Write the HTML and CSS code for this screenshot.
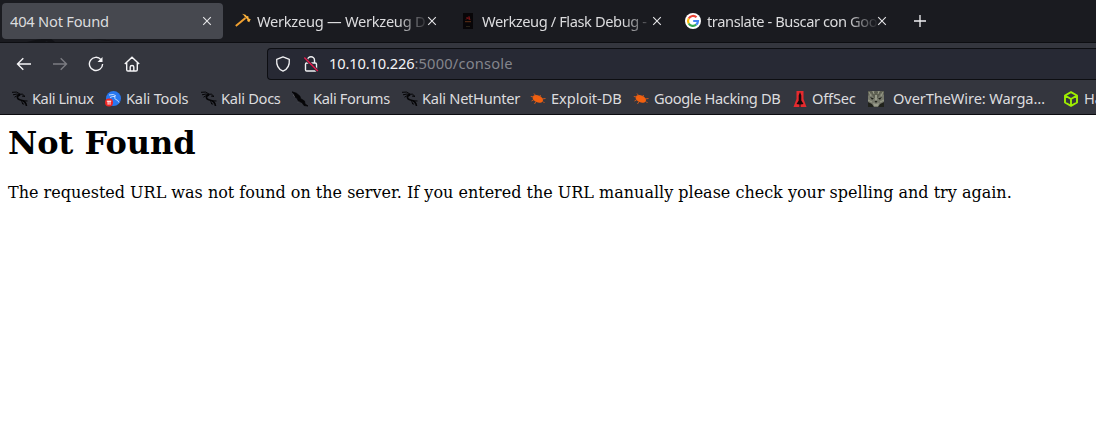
FILE: index.html
```html
<!DOCTYPE html>
<html lang="en">
<head>
<meta charset="utf-8">
<title>404 Not Found</title>
<link rel="stylesheet" href="styles.css">
</head>
<body>
<svg class="defs" width="0" height="0">
  <symbol id="close" viewBox="0 0 10 10"><path d="M1.2 1.2l7.6 7.6M8.800 1.2l-7.600 7.6" fill="none" stroke="#e6e6e8" stroke-width="1.1"/></symbol>
  <symbol id="dragon" viewBox="0 0 16 16"><path d="M0 1.300Q5 0 8 3M1 3.800Q5 2.300 8.500 3.800M2.500 6.200Q4.500 4.500 7 4.500M8 3.200h2.500l2.500 2.300-3-.5" fill="none" stroke="#050507" stroke-width="1"/><path d="M8 4C4 5 5 8.500 8.500 9c3.500.5 5.500 2 6 6" fill="none" stroke="#050507" stroke-width="1.600"/><path d="M11 9.800l4.500.2M9.500 9.500l1.200 3.500h1.500" stroke="#050507" fill="none"/></symbol>
  <symbol id="bug" viewBox="0 0 16 16"><ellipse cx="7.800" cy="8" rx="5.500" ry="3.500" transform="rotate(24 8 8)" fill="#f2600f"/><path d="M.8 5.500L4 6M4 2.500l2.500 3M10.500 4l-1 2M12 8l3.500-.5M1.500 10L4 8.500M4.500 13L6 10.500M13 10.500l1.500 1.500" fill="none" stroke="#d95c1c" stroke-width=".9"/></symbol>
</svg>
<header class="browser">
  <div class="tabs">
    <svg class="art" viewBox="0 0 100 4"><path d="M0 4Q14 0 24 .5L18 4zM16 0h7l5 4h-7zM64 1q14 0 28 3" fill="#101115"/></svg>
    <div class="tab active"><span class="title">404 Not Found</span><svg class="close"><use href="#close"/></svg></div>
    <div class="tab t2">
      <svg class="ico" viewBox="0 0 16 16"><path d="M.8 13L10.500 5" stroke="#f0a030" stroke-width="2"/><path d="M7 .8l3.500.9 1.300 1.600 1.400-.3.500 2.500 2 .8-1.500 3-2-1.300.2-1.500-2.600-2.700-1.300-1.800z" fill="#ffb43c"/></svg>
      <span class="title fade">Werkzeug — Werkzeug D</span><svg class="close"><use href="#close"/></svg></div>
    <div class="tab t3">
      <svg class="ico" viewBox="0 0 16 16"><path fill="#080608" d="M3 0h10v16H3z"/><path d="M6 6.500l3-3 1 3.500M6.500 4.500l3 2" fill="none" stroke="#7e1517" stroke-width="1"/><path d="M5 8.700h6" stroke="#623016" stroke-width="1"/><path d="M6 13.500h4" stroke="#292319"/></svg>
      <span class="title fade">Werkzeug / Flask Debug -</span><svg class="close"><use href="#close"/></svg></div>
    <div class="tab t4">
      <svg class="ico" viewBox="0 0 16 16"><circle cx="8" cy="8" r="8" fill="#fff"/><g fill="none" stroke-width="2.200"><path d="M11.500 4.300A5 5 0 0 0 3.700 5.500" stroke="#ea4335"/><path d="M3.700 5.500a5 5 0 0 0 0 5" stroke="#fbbc05"/><path d="M3.700 10.500a5 5 0 0 0 7.500 1.200" stroke="#34a853"/><path d="M11.200 11.700A5 5 0 0 0 13 8H8.200" stroke="#4285f4"/></g></svg>
      <span class="title fade">translate - Buscar con Goo</span><svg class="close"><use href="#close"/></svg></div>
    <svg class="plus" viewBox="0 0 12 12"><path d="M6 0v12M0 6h12" stroke="#f1f1f3" stroke-width="1.300"/></svg>
  </div>
  <nav class="nav">
    <svg class="btn" viewBox="0 0 16 16"><path d="M15 8H1.500M7.300 2.200L1.500 8l5.800 5.800"/></svg>
    <svg class="btn off" viewBox="0 0 16 16"><path d="M1 8h13.500M8.700 2.200L14.500 8l-5.800 5.800"/></svg>
    <svg class="btn" viewBox="0 0 16 16"><path d="M13 3.600A6.600 6.600 0 1 0 14.600 8"/><path d="M14.500 1v5h-5z" fill="#f5f5f7" stroke="none"/></svg>
    <svg class="btn" viewBox="0 0 16 16"><path d="M.8 8L8 1.200 15.200 8M2.700 6.500v7.200q0 1.300 1.300 1.300h8q1.300 0 1.300-1.300V6.500M6.200 15v-4q0-1.500 1.800-1.500t1.800 1.500v4"/></svg>
    <div class="url">
      <svg class="ico" viewBox="0 0 16 16"><path d="M8 .8L14.300 3.300C14.700 8.500 13 13.300 8 15.200 3 13.300 1.300 8.500 1.700 3.300z" fill="none" stroke="#f1f1f3" stroke-width="1.300" stroke-linejoin="round"/></svg>
      <svg class="ico lock" viewBox="0 0 16 16"><path d="M4.500 7V4.200a3.500 3.500 0 0 1 7 0V7M3.700 7h8.600q1.200 0 1.200 1.200v5.600q0 1.200-1.200 1.200H3.700q-1.200 0-1.200-1.200V8.200Q2.500 7 3.700 7z" fill="none" stroke="#f1f1f3" stroke-width="1.400"/><path d="M1.300 1.500l13.500 13.500" stroke="#272934" stroke-width="3"/><path d="M1.300 1.500l13.500 13.500" stroke="#e51a4c" stroke-width="1.400"/></svg>
      <span class="addr">10.10.10.226<span class="dim">:5000/console</span></span>
    </div>
  </nav>
  <div class="marks">
    <div class="mark m1"><svg class="ico"><use href="#dragon"/></svg><span>Kali Linux</span></div>
    <div class="mark m2"><svg class="ico" viewBox="0 0 16 16"><circle cx="8.500" cy="7.500" r="7.500" fill="#2878f0"/><path d="M4 4q5-1.500 7 1M5 6.500q3-1.500 5-1-1 2.500 1 3t3 3" fill="none" stroke="#d5e5ff" stroke-width=".9"/><circle cx="4" cy="11.500" r="4" fill="#ee2525"/><path d="M1.800 10.200h4.400M3.100 10.200v3.500M5 10.200v3.500" stroke="#fff" fill="none"/></svg><span>Kali Tools</span></div>
    <div class="mark m3"><svg class="ico"><use href="#dragon"/></svg><span>Kali Docs</span></div>
    <div class="mark m4"><svg class="ico" viewBox="0 0 16 16"><path d="M0 .8l4.500 1.500 3.500 3 .5 2.200 4 2.500L13 13l3 2-4-.5-2-3-3.500-1.300-1.500-3L2.500 5.500 3 4z" fill="#050507" stroke="#050507" stroke-width=".8"/><path d="M1 4l2 2M7 10.500l-1 1" stroke="#666" stroke-width=".6"/></svg><span>Kali Forums</span></div>
    <div class="mark m5"><svg class="ico"><use href="#dragon"/></svg><span>Kali NetHunter</span></div>
    <div class="mark m6"><svg class="ico"><use href="#bug"/></svg><span>Exploit-DB</span></div>
    <div class="mark m7"><svg class="ico"><use href="#bug"/></svg><span>Google Hacking DB</span></div>
    <div class="mark m8"><svg class="ico" viewBox="0 0 16 16"><path d="M4.500 0h7v8l3 8h-13l3-8z" fill="#e52a2e"/><path d="M8 1l1.300 3.500v5l2.200 3.500-3 .5V16h-1v-2.500l-3-.5 2.200-3.500v-5z" fill="#16090b"/></svg><span>OffSec</span></div>
    <div class="mark m9"><svg class="ico" viewBox="0 0 16 16"><path fill="#77796c" d="M0 0h16v16H0z"/><path d="M0 0h4l1 2 2-2h2l2 2 1-2h4v4l-3-2-3 5H6L3 2 0 5z" fill="#5d5f52"/><path d="M1 1l2 4M15 1l-2 4M5 0l1 3M11 0l-1 3M0 9l4 2M16 9l-4 2" stroke="#9b9e8a"/><path d="M2 6l4 1.500-2 1.300zM14 6l-4 1.500 2 1.300zM6.500 10h3L8 12zM0 11l4 2 2 3H0zM16 11l-4 2-2 3h6z" fill="#20221b"/><path d="M7 4h2v5H7zM5 12l3 1 3-1-1 3H6z" fill="#989b8a"/></svg><span>OverTheWire: Warga…</span></div>
    <div class="mark m10"><svg class="ico" viewBox="0 0 16 16"><path d="M8 1.200l6 3.300v7L8 14.800 2 11.500v-7zM2 4.500L8 8l6-3.500M8 8v6.800" fill="none" stroke="#9fef00" stroke-width="1.900" stroke-linejoin="round"/></svg><span>Ha</span></div>
  </div>
</header>
<main class="page">
  <h1>Not Found</h1>
  <p>The requested URL was not found on the server. If you entered the URL manually please check your spelling and try again.</p>
</main>
</body>
</html>
```

FILE: styles.css
```css
* { box-sizing: border-box; }
body { margin: 0; background: #fff; overflow: hidden; }
.defs { display: block; }
.browser { font: 14.67px/20px "Noto Sans", sans-serif; color: #dcdcde; background: #34363e; border-bottom: 1px solid #0b0b0f; height: 115px; overflow: hidden; }
.tabs { position: relative; display: flex; align-items: center; height: 43px; background: #1a1b20; border-bottom: 1px solid #0d0e12; padding-left: 2px; }
.art { position: absolute; left: 27px; bottom: 0; width: 100px; height: 4px; }
.tab { display: flex; align-items: center; height: 36px; width: 221px; flex: none; white-space: nowrap; padding-left: 8px; letter-spacing: -.22px; }
.active { background: #46484f; border-radius: 4px; position: relative; }
.t2 { width: 225px; padding-left: 12px; letter-spacing: -.28px; }
.t3 { width: 225px; padding-left: 12px; letter-spacing: -.42px; }
.t4 { width: 225px; padding-left: 12px; letter-spacing: -.42px; }
.ico { width: 16px; height: 16px; flex: none; }
.tab .ico { margin-right: 6px; }
.title { width: 192px; overflow: hidden; flex: none; }
.t2 .title, .t3 .title, .t4 .title { width: 170px; }
.fade { -webkit-mask-image: linear-gradient(to right, #000 140px, transparent 172px); mask-image: linear-gradient(to right, #000 140px, transparent 172px); }
.close { width: 10px; height: 10px; flex: none; }
.plus { width: 12px; height: 12px; margin-left: 16px; }
.nav { display: flex; align-items: center; height: 41px; padding-left: 16px; }
.btn { width: 16px; height: 16px; margin-right: 20px; flex: none; fill: none; stroke: #f5f5f7; stroke-width: 1.4; }
.off { stroke: #7b7c82; }
.url { display: flex; align-items: center; height: 32px; flex: 1; margin-left: 107px; padding-left: 7px; background: #272934; border: 1px solid #0d0e12; border-right: 0; border-radius: 4px 0 0 4px; }
.lock { margin-left: 12px; }
.addr { margin: -2px 0 0 10px; color: #f4f4f6; letter-spacing: -.15px; }
.dim { color: #84858c; letter-spacing: .18px; }
.marks { display: flex; align-items: center; height: 30px; padding: 0 0 1px 12px; white-space: nowrap; letter-spacing: -.2px; }
.mark { display: flex; align-items: center; gap: 4px; flex: none; }
.mark span { margin-top: -1px; }
.m1 { width: 93px; letter-spacing: -.45px; }
.m2 { width: 96px; gap: 5px; }
.m3 { width: 91px; letter-spacing: -.3px; }
.m4 { width: 110px; gap: 5px; letter-spacing: -.38px; }
.m5 { width: 128px; letter-spacing: -.28px; }
.m6 { width: 103px; gap: 5px; letter-spacing: -.08px; }
.m7 { width: 159px; gap: 5px; letter-spacing: -.4px; }
.m8 { width: 76px; }
.m9 { width: 195px; gap: 9px; letter-spacing: -.12px; }
.m10 { gap: 5px; }
.page { font: 16px/19px "DejaVu Serif", serif; color: #000; padding: 9px 8px; }
h1 { font-size: 32px; line-height: 38px; margin: 0 0 21px; }
p { margin: 0; white-space: nowrap; }
```
